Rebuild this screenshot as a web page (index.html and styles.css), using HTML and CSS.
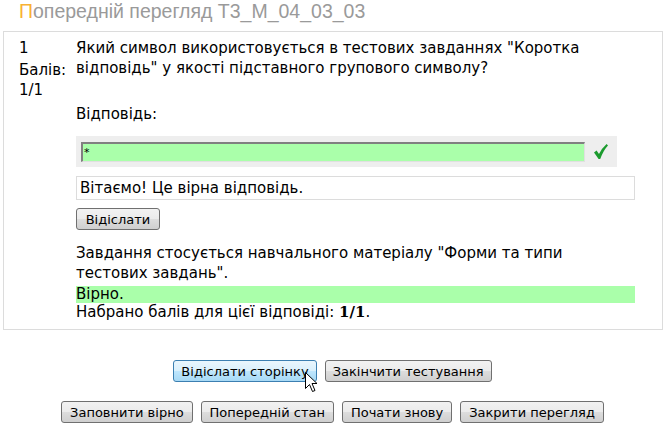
FILE: index.html
```html
<!DOCTYPE html>
<html lang="uk">
<head>
    <meta charset="UTF-8">
    <title>Попередній перегляд T3_M_04_03_03</title>
    <link rel="stylesheet" href="styles.css">
</head>
<body>
    <h2 class="page-title"><span class="first-letter">П</span>опередній перегляд T3_M_04_03_03</h2>

    <div class="que">
        <div class="info">
            <div class="qno">1</div>
            <div class="grade">Балів:<br>1/1</div>
        </div>
        <div class="content">
            <div class="qtext">Який символ використовується в тестових завданнях "Коротка відповідь" у якості підставного групового символу?</div>
            <div class="prompt">Відповідь:</div>
            <div class="answer">
                <input type="text" class="answer-input" value="*" readonly>
                <svg class="check" width="14" height="15" viewBox="0 0 14 15">
                    <path d="M0 8.5 L2.6 6.6 L5 10 Q8 4 12.6 0 L14 1.4 Q9.5 6 6.2 15 L4.6 15 Z" fill="#1b9b2e"/>
                </svg>
            </div>
            <div class="feedback">Вітаємо! Це вірна відповідь.</div>
            <button class="btn">Відіслати</button>
            <div class="general">Завдання стосується навчального матеріалу "Форми та типи тестових завдань".</div>
            <div class="correct">Вірно.</div>
            <div class="score">Набрано балів для цієї відповіді: <b class="mark">1/1</b>.</div>
        </div>
    </div>

    <div class="buttons">
        <div class="btn-row">
            <button class="btn btn-hover">Відіслати сторінку</button>
            <button class="btn">Закінчити тестування</button>
            <svg class="cursor" width="13" height="21" viewBox="0 0 13 21">
                <path d="M0.5 0.5 L0.5 16.5 L4.5 12.5 L7.5 19.5 L10 18.5 L7 11.5 L12 11.5 Z" fill="#fff" stroke="#000" stroke-width="1"/>
            </svg>
        </div>
        <div class="btn-row btn-row-wide">
            <button class="btn">Заповнити вірно</button>
            <button class="btn">Попередній стан</button>
            <button class="btn">Почати знову</button>
            <button class="btn">Закрити перегляд</button>
        </div>
    </div>
</body>
</html>
```

FILE: styles.css
```css
* {
    margin: 0;
    padding: 0;
    box-sizing: border-box;
}
body {
    background: #fff;
    font-family: 'DejaVu Sans', sans-serif;
    color: #000;
    width: 665px;
}
.page-title {
    font-family: 'Liberation Sans', Arial, sans-serif;
    font-weight: normal;
    font-size: 19.5px;
    line-height: 22px;
    color: #9a9a9a;
    padding-left: 19px;
    height: 31px;
}
.first-letter {
    color: #f8b133;
}
.que {
    display: flex;
    margin-left: 3px;
    width: 660px;
    border: 1px solid #dcdcdc;
    padding: 6px 27px 8px 15px;
    font-size: 15px;
    line-height: 20px;
}
.info {
    width: 57px;
    flex-shrink: 0;
}
.qno {
    height: 22px;
}
.content {
    flex: 1;
}
.prompt {
    margin-top: 26px;
}
.answer {
    display: flex;
    align-items: center;
    width: 541px;
    height: 31px;
    margin-top: 12px;
    background: #eeeeee;
    padding: 0 5px;
}
.answer-input {
    width: 504px;
    height: 20px;
    background: #aaffaa;
    border: none;
    border-top: 2px solid #808080;
    border-left: 2px solid #808080;
    border-right: 1px solid #e0e0e0;
    border-bottom: 1px solid #e0e0e0;
    font-family: 'DejaVu Sans', sans-serif;
    font-size: 11px;
    padding-left: 1px;
    outline: none;
}
.check {
    margin-left: 9px;
}
.feedback {
    margin-top: 9px;
    border: 1px solid #dcdcdc;
    height: 24px;
    line-height: 22px;
    padding-left: 3px;
}
.btn {
    font-family: 'DejaVu Sans', sans-serif;
    font-size: 13px;
    height: 22px;
    padding: 0 7px;
    color: #000;
    border: 1px solid #707070;
    border-radius: 3px;
    background: linear-gradient(#f2f2f2 0%, #ebebeb 50%, #dddddd 51%, #cfcfcf 100%);
}
.content .btn {
    margin-top: 8px;
    width: 84px;
}
.general {
    margin-top: 13px;
}
.correct {
    margin-top: 3px;
    background: #aaffaa;
    height: 17px;
    line-height: 17px;
}
.score {
    line-height: 18px;
}
.mark {
    font-family: 'DejaVu Serif', serif;
    font-size: 15px;
}
.buttons {
    margin-top: 30px;
    display: flex;
    flex-direction: column;
    align-items: center;
    gap: 19px;
}
.btn-row {
    display: flex;
    gap: 8px;
    position: relative;
}
.btn-row-wide .btn {
    padding: 0 8px;
}
.btn-hover {
    border-color: #3c7fb1;
    background: linear-gradient(#eaf6fd 0%, #d9f0fc 50%, #bee6fd 51%, #a7d9f5 100%);
}
.cursor {
    position: absolute;
    left: 132px;
    top: 12px;
}
```
